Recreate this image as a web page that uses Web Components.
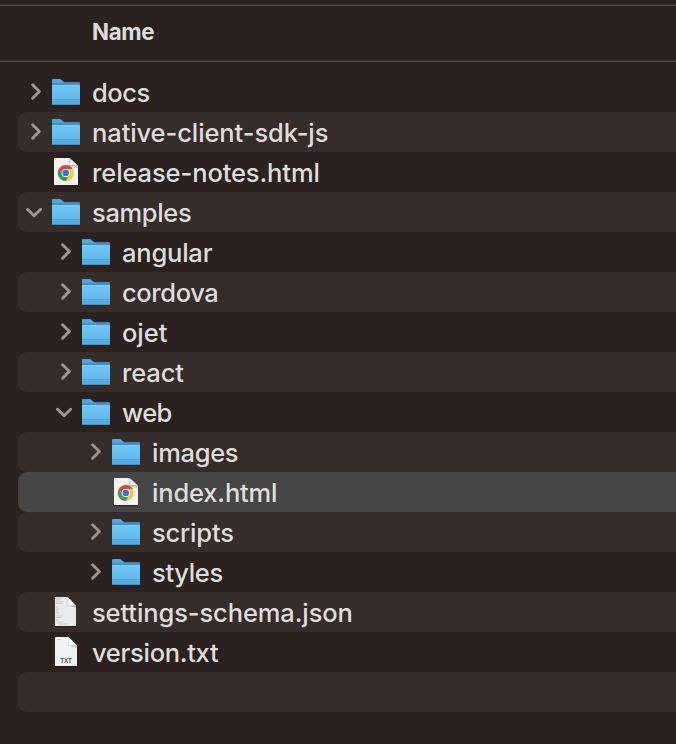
<!DOCTYPE html>
<html lang="en"><head><meta charset="utf-8"><title>Files</title>
<style>
html,body{margin:0;height:100%;background:#2b2220;overflow:hidden}
</style></head><body>
<file-browser>
<file-row kind="folder" state="closed" fit="57.5">docs</file-row>
<file-row kind="folder" state="closed" fit="236" striped>native-client-sdk-js</file-row>
<file-row kind="chrome" fit="227.5">release-notes.html</file-row>
<file-row kind="folder" state="open" fit="99" striped>samples</file-row>
<file-row kind="folder" state="closed" level="1" fit="90">angular</file-row>
<file-row kind="folder" state="closed" level="1" fit="96" striped>cordova</file-row>
<file-row kind="folder" state="closed" level="1" fit="45">ojet</file-row>
<file-row kind="folder" state="closed" level="1" fit="61.5" striped>react</file-row>
<file-row kind="folder" state="open" level="1" fit="49.5">web</file-row>
<file-row kind="folder" state="closed" level="2" fit="86" striped>images</file-row>
<file-row kind="chrome" level="2" fit="125" selected>index.html</file-row>
<file-row kind="folder" state="closed" level="2" fit="81.5" striped>scripts</file-row>
<file-row kind="folder" state="closed" level="2" fit="70.5">styles</file-row>
<file-row kind="json" fit="260.5" striped>settings-schema.json</file-row>
<file-row kind="txt" fit="126">version.txt</file-row>
<file-row striped></file-row>
</file-browser>
<script>
const ICONS = {
folder:`<svg width="32" height="40" viewBox="0 0 32 40"><defs><linearGradient id="g" x1="0" y1="0" x2="0" y2="1"><stop offset="0" stop-color="#70c7f6"/><stop offset=".6" stop-color="#64bdf0"/><stop offset="1" stop-color="#55abe0"/></linearGradient></defs>
<path d="M2 32.5h28v1.3H2z" fill="#191413" opacity=".75"/>
<path d="M2 8q0-1 1-1h6.6q1 0 1.8.8l1.8 1.7q.7.7 1.7.7H29q1 0 1 1V31H2z" fill="#4fa6db"/>
<path d="M2 11.3h28v1.8H2z" fill="#398cc5"/>
<path d="M2 14q0-1 1-1h26q1 0 1 1v18q0 1-1 1H3q-1 0-1-1z" fill="url(#g)"/>
<path d="M2.5 13.4h27" stroke="#83d0f7" stroke-width=".8"/><path d="M2 27.5h28M2 29.5h28" stroke="#4a9fd3" stroke-width=".7"/><path d="M2.5 32.6h27" stroke="#3d86b5" stroke-width=".8"/></svg>`,
chrome:`<svg width="32" height="40" viewBox="0 0 32 40"><path d="M4 33h24v1H4z" fill="#171211" opacity=".7"/><path d="M4 6h15.5L28 14v19H4z" fill="#f3f3f2"/><path d="M19.5 6v8H28v2.5L19 14z" fill="#d0d0d0"/><path d="M19.5 6v8H28z" fill="#b4b4b4"/><path d="M20.4 7v6.1H27z" fill="#fafafa"/>
<g transform="translate(15.8 21)"><circle r="8" fill="#f7c744"/><path d="M-6.93-4A8 8 0 0 1 6.93-4H0A4 4 0 0 0-3.46 2z" fill="#d9493c"/><path d="M-6.93-4A8 8 0 0 0 0 8L3.46 2A4 4 0 0 1-3.46 2z" fill="#3d9953"/><circle r="4.1" fill="#fff"/><circle r="3.2" fill="#2f73e0"/></g></svg>`,
json:`<svg width="32" height="40" viewBox="0 0 32 40"><path d="M5 34h21v1H5z" fill="#171211" opacity=".7"/><path d="M5 5h12.5L26 13.5V34H5z" fill="#ebebea"/><path d="M5.5 6.5h7M6 8h4M6 10h8M6 11.5h6M6 15h2M6 17h3M6 19h2M6 21h3M6 24h7M6 25.5h5M6 28h2M7 30h7M8 32h10" stroke="#c3c3c1" stroke-width=".8"/><path d="M17.5 5v8.5H26v2L17 13.5z" fill="#b4b4b4"/><path d="M18.3 5.8v6.9h6.9z" fill="#fff"/></svg>`,
txt:`<svg width="32" height="40" viewBox="0 0 32 40"><path d="M5 34h22v1H5z" fill="#171211" opacity=".7"/><path d="M5 5h13.5L27 13.5V34H5z" fill="#f1f1f1"/><path d="M7 7.5h4" stroke="#c6c6c6" stroke-width=".7"/><path d="M18.5 5v8.5H27v2L18 13.5z" fill="#b4b4b4"/><path d="M19.3 5.8v6.9h6.9z" fill="#fff"/><text x="16.1" y="31" text-anchor="middle" textLength="11.6" font-family="Inter,sans-serif" font-size="5.8" font-weight="600" fill="#454545">TXT</text></svg>`
};
const ARROWS = {
closed:`<path d="M14.6 12.8l6.8 6.7-6.8 6.7"/>`,
open:`<path d="M9.5 17.3l6.6 6.5 6.6-6.5"/>`
};
customElements.define('file-row', class extends HTMLElement {
  connectedCallback(){
    const root = this.attachShadow({mode:'open'});
    const kind = this.getAttribute('kind'), level = +(this.getAttribute('level')||0);
    root.innerHTML = `<style>
:host{display:flex;box-sizing:border-box;height:40px;margin-left:18px;border-radius:9px 0 0 9px;color:#dfdddc;font:450 25.5px/40px Inter,sans-serif;white-space:nowrap}
:host([striped]){background:#362c2a}
:host([selected]){background:#464646}
svg{display:block;flex:none}
.arrow{fill:none;stroke:#9c9694;stroke-width:2.9;stroke-linecap:round;stroke-linejoin:round}
.body{display:flex;padding-left:${level*30}px}
.label{padding:1px 0 0 10px}
</style>` + (kind ? `<div class="body"><svg class="arrow" width="32" height="40" viewBox="0 0 32 40">${ARROWS[this.getAttribute('state')]||''}</svg>${ICONS[kind]}<div class="label"><slot></slot></div></div>`:'');
    if(kind){
      const r = document.createRange(); r.selectNodeContents(this);
      const w = r.getBoundingClientRect().width, n = this.textContent.length;
      root.querySelector('.label').style.letterSpacing = ((+this.getAttribute('fit') + .3 - w)/n).toFixed(3)+'px';
    }
  }
});
customElements.define('column-header', class extends HTMLElement {
  constructor(){super();this.attachShadow({mode:'open'}).innerHTML=`<style>
:host{display:flex;align-items:center;box-sizing:border-box;height:58px;margin-top:4px;padding:0 0 2px 92px;border:solid #4b4341;border-width:1px 0;font:650 22.3px/28px Inter,sans-serif;letter-spacing:-.35px;color:#dfdddc;border-top-color:#38302e;background:linear-gradient(#4b4341 1px,transparent 1px,transparent calc(100% - 1px),#38302e calc(100% - 1px))}
</style><slot></slot>`}
});
customElements.define('file-browser', class extends HTMLElement {
  constructor(){super();this.attachShadow({mode:'open'}).innerHTML=`<style>
:host{display:block;height:744px;width:676px;overflow:hidden;background:#2b2220}
.list{display:flex;flex-direction:column;padding-top:10px}
.page{display:flow-root}
</style><div class="page"><column-header>Name</column-header><div class="list"><slot></slot></div></div>`}
});
</script></body></html>
